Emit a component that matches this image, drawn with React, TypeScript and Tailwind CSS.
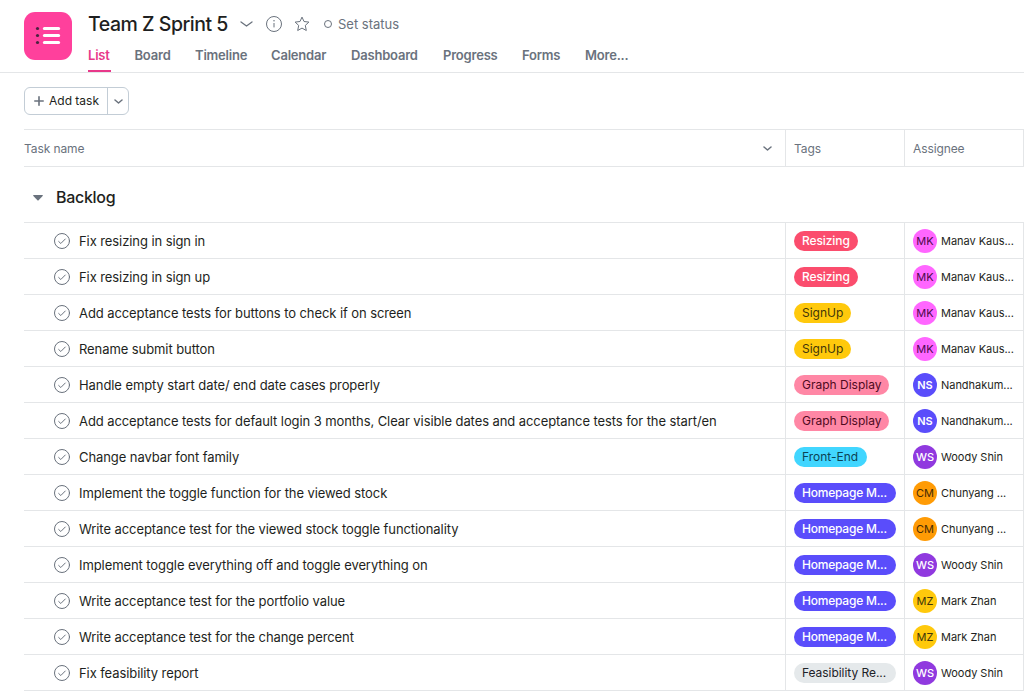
type Row = { task: string; tag: string; who: string };

const TAGS: Record<string, { label: string; style: string }> = {
  resizing: { label: 'Resizing', style: 'w-16 bg-[#fb4d6d] text-white font-medium tracking-[-0.1px]' },
  signup: { label: 'SignUp', style: 'w-[57px] bg-[#ffc90c] text-[#42360a]' },
  graph: { label: 'Graph Display', style: 'w-[95px] bg-[#ff87a5] text-[#4f0a1e]' },
  front: { label: 'Front-End', style: 'w-[73px] bg-[#41d6ff] text-[#0c4254]' },
  home: { label: 'Homepage M...', style: 'w-[102px] bg-[#5a4dfb] text-white font-medium tracking-[-0.22px]' },
  report: { label: 'Feasibility Re...', style: 'w-[102px] bg-[#e5e9eb] text-[#1e2228] tracking-[-0.05px]' },
};

const PEOPLE: Record<string, { name: string; style: string }> = {
  MK: { name: 'Manav Kaus...', style: 'bg-[#ff66ff] text-[#4d0a4d]' },
  NS: { name: 'Nandhakum...', style: 'bg-[#5a4dfb] text-white font-semibold' },
  WS: { name: 'Woody Shin', style: 'bg-[#9039df] text-white font-medium' },
  CM: { name: 'Chunyang ...', style: 'bg-[#ff9b05] text-[#472c05]' },
  MZ: { name: 'Mark Zhan', style: 'bg-[#ffc90c] text-[#42360a]' },
};

const ROWS: Row[] = [
  { task: 'Fix resizing in sign in', tag: 'resizing', who: 'MK' },
  { task: 'Fix resizing in sign up', tag: 'resizing', who: 'MK' },
  { task: 'Add acceptance tests for buttons to check if on screen', tag: 'signup', who: 'MK' },
  { task: 'Rename submit button', tag: 'signup', who: 'MK' },
  { task: 'Handle empty start date/ end date cases properly', tag: 'graph', who: 'NS' },
  { task: 'Add acceptance tests for default login 3 months, Clear visible dates and acceptance tests for the start/en', tag: 'graph', who: 'NS' },
  { task: 'Change navbar font family', tag: 'front', who: 'WS' },
  { task: 'Implement the toggle function for the viewed stock', tag: 'home', who: 'CM' },
  { task: 'Write acceptance test for the viewed stock toggle functionality', tag: 'home', who: 'CM' },
  { task: 'Implement toggle everything off and toggle everything on', tag: 'home', who: 'WS' },
  { task: 'Write acceptance test for the portfolio value', tag: 'home', who: 'MZ' },
  { task: 'Write acceptance test for the change percent', tag: 'home', who: 'MZ' },
  { task: 'Fix feasibility report', tag: 'report', who: 'WS' },
];

const TABS = [
  { label: 'List', width: 'w-[22.5px]' },
  { label: 'Board', width: 'w-[36.5px]' },
  { label: 'Timeline', width: 'w-[52px]' },
  { label: 'Calendar', width: 'w-14' },
  { label: 'Dashboard', width: 'w-[68px]' },
  { label: 'Progress', width: 'w-[55px]' },
  { label: 'Forms', width: 'w-[39px]' },
  { label: 'More...', width: 'w-11' },
];

function Chevron({ w, h, sw }: { w: number; h: number; sw: number }) {
  return (
    <svg width={w} height={h} viewBox={`0 0 ${w} ${h}`} fill="none" stroke="#6a727d" strokeWidth={sw} strokeLinecap="round" strokeLinejoin="round">
      <path d={`M1 1 L${w / 2} ${h - 1} L${w - 1} 1`} />
    </svg>
  );
}

function ProjectIcon() {
  return (
    <svg width="48" height="48" viewBox="0 0 48 48" className="shrink-0">
      <rect width="48" height="48" rx="11" fill="#ff409c" />
      {[16.5, 23.5, 30.5].map((y) => (
        <g key={y}>
          <circle cx="13.5" cy={y} r="1.6" fill="#4a2340" />
          <path d={`M20.4 ${y}H34.6`} stroke="#fff" strokeWidth="3" strokeLinecap="round" />
        </g>
      ))}
    </svg>
  );
}

function CheckCircle() {
  return (
    <svg width="16" height="16" viewBox="0 0 16 16" fill="none" stroke="#6a727d" strokeLinecap="round" strokeLinejoin="round" className="shrink-0">
      <circle cx="8" cy="8" r="7.5" />
      <path d="M4.7 8.5 6.8 10.5 11.3 6" />
    </svg>
  );
}

export default function App() {
  return (
    <div className="h-[692px] w-[1024px] overflow-hidden bg-white font-['Inter',sans-serif] text-[13px] text-[#1e1f21]">
      <header className="flex h-[73px] border-b border-[#e4e6e8] pl-6 pt-3">
        <ProjectIcon />
        <div className="ml-4 flex flex-col">
          <div className="flex h-6 items-center">
            <h1 className="w-[151.5px] whitespace-nowrap text-[19.5px] font-medium leading-6 tracking-[-0.48px]">Team Z Sprint 5</h1>
            <Chevron w={13} h={6} sw={1.3} />
            <svg width="16" height="16" viewBox="0 0 16 16" fill="none" stroke="#6a727d" className="ml-[13.5px]">
              <circle cx="8" cy="8" r="7.5" />
              <path d="M8 7v4.4" />
              <circle cx="8" cy="4.8" r=".75" fill="#6a727d" stroke="none" />
            </svg>
            <svg width="16" height="16" viewBox="0 0 16 16" fill="none" stroke="#6a727d" strokeLinejoin="round" className="ml-3">
              <path d="M8 1.1 10 5.5 14.9 6.1 11.3 9.4 12.3 14.5 8 12.1 3.7 14.5 4.7 9.4 1.1 6.1 6 5.5Z" />
            </svg>
            <span className="ml-[14px] size-2 rounded-full border border-[#6a727d]" />
            <span className="ml-1.5 whitespace-nowrap pt-0.5 text-[#6a727d]">Set status</span>
          </div>
          <nav className="mt-[7px] flex h-[29px] gap-6 font-semibold tracking-[-0.2px] text-[#6a727d]">
            {TABS.map((t, i) => (
              <span key={t.label} className={`${t.width} whitespace-nowrap pt-[3px] ${i === 0 ? 'h-full border-b-2 border-[#e8388a] text-[#e8388a]' : ''}`}>
                {t.label}
              </span>
            ))}
          </nav>
        </div>
      </header>

      <div className="flex h-14 pl-6 pt-3.5">
        <div className="flex h-7 w-[105px] rounded-md border border-[#c3cdd6] text-xs">
          <div className="flex w-[83px] items-center border-r border-[#c3cdd6] pl-[9px]">
            <svg width="10" height="10" viewBox="0 0 10 10" stroke="#6a727d" strokeWidth="1.6" strokeLinecap="round">
              <path d="M5 .8V9.2M.8 5H9.2" />
            </svg>
            <span className="ml-[5px] whitespace-nowrap">Add task</span>
          </div>
          <div className="flex flex-1 items-center justify-center">
            <Chevron w={9} h={5} sw={1.5} />
          </div>
        </div>
      </div>

      <main className="ml-6">
        <div className="grid h-[38px] grid-cols-[762px_119px_119px] border-y border-[#e4e6e8] text-xs tracking-[-0.1px] text-[#6a727d]">
          <div className="flex items-center justify-between border-r border-[#e4e6e8] pr-[13.5px]">
            <span className="pt-0.5">Task name</span>
            <Chevron w={9} h={5} sw={1.5} />
          </div>
          <div className="flex items-center border-r border-[#e4e6e8] pl-2 pt-0.5">Tags</div>
          <div className="flex items-center border-r border-[#e4e6e8] pl-2 pt-0.5">Assignee</div>
        </div>

        <div className="flex h-14 items-center border-b border-[#e4e6e8] pl-[9px] pt-1.5">
          <svg width="10" height="6" viewBox="0 0 10 6">
            <path d="M.6 0H9.4Q10.2 .2 9.6 .9L5.6 5.2Q5 5.8 4.4 5.2L.4 .9Q-.2 .2 .6 0Z" fill="#6a727d" />
          </svg>
          <h2 className="ml-[13px] pb-0.5 text-base font-medium leading-5 tracking-[-0.3px]">Backlog</h2>
        </div>

        {ROWS.map((r) => (
          <div key={r.task} className="grid h-9 grid-cols-[762px_119px_119px] border-b border-[#e4e6e8]">
            <div className="flex items-center border-r border-[#e4e6e8] pl-[30px]">
              <CheckCircle />
              <span className="ml-[9px] whitespace-nowrap pt-0.5 tracking-[-0.083px]">{r.task}</span>
            </div>
            <div className="flex items-center border-r border-[#e4e6e8] pl-2">
              <span className={`h-5 whitespace-nowrap rounded-full pl-2 text-xs leading-5 ${TAGS[r.tag].style}`}>{TAGS[r.tag].label}</span>
            </div>
            <div className="flex items-center border-r border-[#e4e6e8] pl-2 pt-px">
              <span className={`flex size-6 shrink-0 items-center justify-center rounded-full text-[11px] ${PEOPLE[r.who].style}`}>{r.who}</span>
              <span className="ml-1 whitespace-nowrap pt-px text-[11px] tracking-[-0.03px]">{PEOPLE[r.who].name}</span>
            </div>
          </div>
        ))}
      </main>
    </div>
  );
}
